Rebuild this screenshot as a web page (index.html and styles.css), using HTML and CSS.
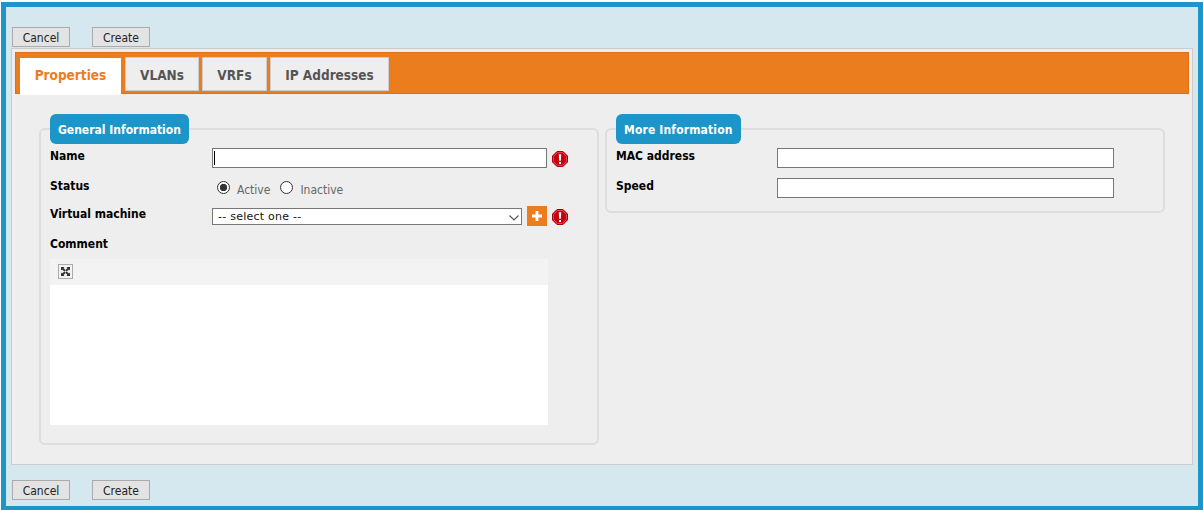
FILE: index.html
```html
<!DOCTYPE html>
<html lang="en">
<head>
<meta charset="utf-8">
<title>Create interface</title>
<link rel="stylesheet" href="styles.css">
</head>
<body>
<div class="page">
  <div class="actions actions-top">
    <button class="btn" type="button">Cancel</button>
    <button class="btn" type="button">Create</button>
  </div>
  <div class="panel">
    <div class="tabbar">
      <a class="tab tab-active tab-properties">Properties</a>
      <a class="tab tab-vlans">VLANs</a>
      <a class="tab tab-vrfs">VRFs</a>
      <a class="tab tab-ip">IP Addresses</a>
    </div>
    <div class="columns">
      <fieldset class="group group-left">
        <legend class="group-title">General Information</legend>
        <div class="row row-name">
          <label class="label">Name</label>
          <span class="text-wrap">
            <input class="text text-name" type="text">
            <span class="caret"></span>
          </span>
          <svg class="err" viewBox="0 0 16 16" width="16" height="16"><path d="M5 .5h6L15.500 5v6L11 15.500H5L.5 11V5z" fill="#c4000e" stroke="#a8000a"/><path d="M5.500 1.600h5l3.900 3.900v5l-3.900 3.900h-5l-3.900-3.900v-5z" fill="none" stroke="#e8626a" stroke-width=".8"/><path d="M6.800 3.200h2.400l-.3 6.500H7.100z M7 10.900h2v2.100H7z" fill="#fff"/></svg>
        </div>
        <div class="row row-status">
          <label class="label">Status</label>
          <div class="radios">
            <label class="radio"><input class="radio-input" type="radio" name="status" checked><span class="radio-text">Active</span></label>
            <label class="radio"><input class="radio-input" type="radio" name="status"><span class="radio-text">Inactive</span></label>
          </div>
        </div>
        <div class="row row-vm">
          <label class="label">Virtual machine</label>
          <span class="select-wrap">
            <select class="select"><option>-- select one --</option></select>
            <svg class="chevron" viewBox="0 0 10 6" width="10" height="6"><path d="M.5.5 5 5l4.500-4.500" fill="none" stroke="#555" stroke-width="1.100"/></svg>
          </span>
          <span class="add"><svg viewBox="0 0 20 20" width="20" height="20"><path d="M8.600 5h2.800v3.600H15v2.800h-3.600V15H8.600v-3.600H5V8.600h3.600z" fill="#fff"/></svg></span>
          <svg class="err" viewBox="0 0 16 16" width="16" height="16"><path d="M5 .5h6L15.500 5v6L11 15.500H5L.5 11V5z" fill="#c4000e" stroke="#a8000a"/><path d="M5.500 1.600h5l3.900 3.900v5l-3.900 3.900h-5l-3.900-3.900v-5z" fill="none" stroke="#e8626a" stroke-width=".8"/><path d="M6.800 3.200h2.400l-.3 6.500H7.100z M7 10.900h2v2.100H7z" fill="#fff"/></svg>
        </div>
        <div class="label label-comment">Comment</div>
        <div class="editor">
          <div class="editor-bar">
            <span class="editor-btn"><svg viewBox="0 0 13 13" width="13" height="13"><path d="M2 2h3.500L4.600 3l2 2.200L5.300 6.500 3 4.500 2 5.500z M11 2v3.500L10 4.500 7.700 6.500 6.400 5.200l2-2.200L7.500 2z M2 11V7.500l1 1 2.300-2 1.300 1.300-2 2.200.9 1z M11 11H7.500l.9-1-2-2.200 1.300-1.300 2.300 2 1-1z" fill="#333"/></svg></span>
          </div>
          <div class="editor-body"></div>
        </div>
      </fieldset>
      <fieldset class="group group-right">
        <legend class="group-title">More Information</legend>
        <div class="row row-name">
          <label class="label label-right">MAC address</label>
          <input class="text text-right" type="text">
        </div>
        <div class="row row-speed">
          <label class="label label-right">Speed</label>
          <input class="text text-right" type="text">
        </div>
      </fieldset>
    </div>
  </div>
  <div class="actions actions-bottom">
    <button class="btn" type="button">Cancel</button>
    <button class="btn" type="button">Create</button>
  </div>
</div>
</body>
</html>
```
FILE: styles.css
```css
* { box-sizing: border-box; }
html, body { margin: 0; padding: 0; background: #fff; }
body { font-family: "DejaVu Sans Condensed", "DejaVu Sans", sans-serif; font-size: 12px; color: #000; }
.page {
  margin: 2px 0 0 1px;
  height: 508px;
  border: 5px solid #1c96c8;
  border-bottom-width: 4px;
  background: #d5e7ef;
  overflow: hidden;
}
.actions { display: flex; gap: 22px; padding-left: 6px; }
.actions-top { padding-top: 20px; }
.actions-bottom { padding-top: 15px; }
.btn {
  width: 58px; height: 20px; padding: 2px 0 0;
  border: 1px solid #aaa; background: #e3e3e3; color: #222;
  font: 12px "DejaVu Sans Condensed", "DejaVu Sans", sans-serif;
}
.panel {
  margin: 1px 5px 0;
  height: 417px;
  padding: 3px;
  border: 1px solid #ccc;
  background: #eee;
}
.tabbar {
  display: flex; align-items: flex-start;
  height: 42px; padding: 4px 0 0 4px;
  background: #ec7d1e;
  border: 1px solid #dc7217;
}
.tab {
  display: flex; align-items: center; justify-content: center;
  height: 34px; margin-right: 3px; padding-top: 2px;
  background: #eee; border: 1px solid #ccc; color: #555;
  font-weight: bold; font-size: 13.500px;
}
.tab-active {
  height: 37px; margin: 1px 4px 0 0; padding: 0 0 3px;
  background: #fff; border: 0; color: #ec7d1e;
}
.tab-properties { width: 101px; }
.tab-vlans { width: 74px; }
.tab-vrfs { width: 65px; }
.tab-ip { width: 119px; }
.columns { display: flex; gap: 6px; padding: 20px 0 0 24px; }
.group {
  margin: 0; min-width: 0; padding: 0 9px;
  border: 2px solid #ddd; border-radius: 6px;
}
.group-left { width: 560px; height: 331px; }
.group-right { width: 560px; height: 99px; }
.group-title {
  padding: 2px 0 0 8px; height: 30px; line-height: 28px;
  background: #1c96c8; color: #fff; border-radius: 6px;
  font-weight: bold; font-size: 12px; white-space: nowrap;
}
.group-left .group-title { width: 139px; }
.group-right .group-title { width: 125px; letter-spacing: .15px; }
.row { display: flex; align-items: flex-start; }
.row-name { padding-top: 4px; height: 34px; }
.row-speed { height: 30px; }
.row-status { height: 30px; padding-top: 1px; }
.row-vm { height: 29px; }
.label { width: 162px; font-weight: bold; font-size: 12px; line-height: 15px; }
.label-right { width: 161px; }
.row-name .label, .row-speed .label { padding-top: 1px; }
.row-vm .label { margin-top: -1px; }
.text { height: 20px; border: 1px solid #777; background: #fff; outline: none; padding: 0 1px; }
.text-wrap { position: relative; display: block; height: 20px; }
.text-name { display: block; width: 335px; }
.caret { position: absolute; left: 2px; top: 3px; width: 1px; height: 14px; background: #000; }
.text-right { width: 337px; }
.err { margin-left: 5px; flex: none; }
.row-name .err { margin-top: 3px; }
.radios { display: flex; gap: 10px; padding: 2px 0 0 5px; color: #666; }
.radio { display: flex; align-items: flex-start; gap: 7px; }
.radio-text { padding-top: 2px; line-height: 15px; }
.radio-input {
  appearance: none; margin: 0; width: 13px; height: 13px;
  border: 1px solid #333; border-radius: 50%; background: #fff;
}
.radio-input:checked { background: radial-gradient(circle, #333 0 3.400px, #fff 4px); }
.select-wrap { position: relative; display: block; width: 310px; height: 17px; }
.select {
  appearance: none; display: block;
  width: 310px; height: 17px; padding: 0 0 0 5px;
  border: 1px solid #777; border-radius: 0; background: #fff; color: #111;
  font: 11px "DejaVu Sans", sans-serif; letter-spacing: .25px;
}
.chevron { position: absolute; right: 3px; top: 7px; pointer-events: none; }
.add { display: block; width: 20px; height: 20px; margin: -2px 0 0 5px; background: #ec7d1e; }
.add svg { display: block; }
.row-vm .err { margin-top: 1px; }
.label-comment { width: auto; height: 15px; margin-bottom: 7px; }
.editor { width: 498px; }
.editor-bar { height: 26px; padding: 5px 0 0 8px; background: #f3f3f3; }
.editor-btn { display: block; width: 15px; height: 15px; border: 1px solid #aaa; background: #f3f3f3; }
.editor-btn svg { display: block; }
.editor-body { height: 140px; background: #fff; }
```
